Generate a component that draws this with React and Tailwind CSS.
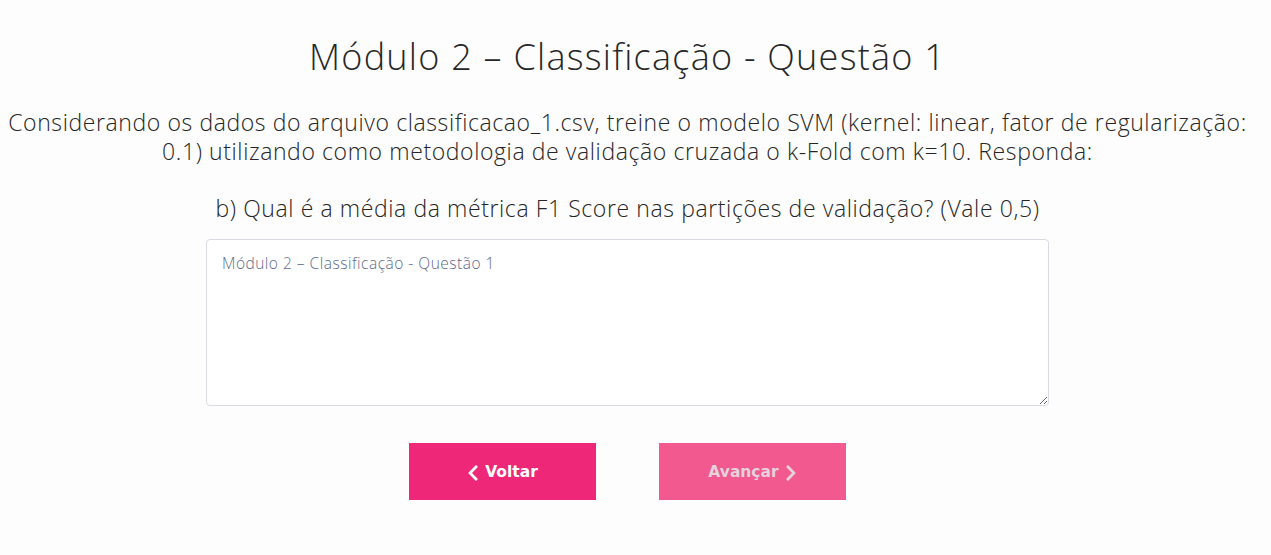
import React from 'react';

const ChevronLeft = ({ className }) => (
  <svg viewBox="0 0 320 512" className={className} fill="currentColor">
    <path d="M34.52 239.03L228.87 44.69c9.37-9.37 24.57-9.37 33.94 0l22.67 22.67c9.36 9.36 9.37 24.52.04 33.9L131.49 256l154.02 154.75c9.34 9.38 9.32 24.54-.04 33.9l-22.67 22.67c-9.37 9.37-24.57 9.37-33.94 0L34.52 272.97c-9.37-9.37-9.37-24.57 0-33.94z" />
  </svg>
);

const ChevronRight = ({ className }) => (
  <svg viewBox="0 0 320 512" className={className} fill="currentColor">
    <path d="M285.48 272.97L91.13 467.31c-9.37 9.37-24.57 9.37-33.94 0l-22.67-22.67c-9.36-9.36-9.37-24.52-.04-33.9L188.51 256 34.48 101.25c-9.34-9.38-9.32-24.54.04-33.9l22.67-22.67c9.37-9.37 24.57-9.37 33.94 0l194.35 194.34c9.37 9.37 9.37 24.57 0 33.95z" />
  </svg>
);

export default function App() {
  return (
    <div className="min-h-[555px] bg-[#fdfdfd] text-[#262626] font-['Open_Sans',sans-serif] font-light">
      <div className="flex flex-col items-center pt-[33px] pr-[16px]">
        <h1 className="text-[36px] leading-[48px] tracking-[1.25px] text-center">
          Módulo 2 – Classificação - Questão 1
        </h1>

        <p className="mt-[27px] text-[23px] leading-[29px] tracking-[0.6px] text-center">
          <span className="block whitespace-nowrap">
            Considerando os dados do arquivo classificacao_1.csv, treine o modelo SVM (kernel: linear, fator de regularização:
          </span>
          <span className="block whitespace-nowrap">
            0.1) utilizando como metodologia de validação cruzada o k-Fold com k=10. Responda:
          </span>
        </p>

        <p className="mt-[28px] text-[23px] leading-[29px] tracking-[0.6px] text-center">
          b) Qual é a média da métrica F1 Score nas partições de validação? (Vale 0,5)
        </p>

        <textarea
          className="mt-[16px] w-[843px] h-[167px] bg-white border border-[#d9dbe3] rounded-[4px] px-[15px] py-[12px] text-[15.5px] leading-[22px] tracking-[0.5px] font-light text-[#5d6a8a] placeholder:text-[#5d6a8a] outline-none resize-y"
          placeholder="Módulo 2 – Classificação - Questão 1"
        />

        <div className="mt-[37px] flex gap-[63px]">
          <button className="w-[187px] h-[57px] pt-[2px] bg-[#ef2778] text-white flex items-center justify-center gap-[6px] font-['DejaVu_Sans',sans-serif] font-bold text-[15.5px]">
            <ChevronLeft className="w-[12px] h-[18px]" />
            Voltar
          </button>
          <button className="w-[187px] h-[57px] pt-[2px] bg-[#f1598f] text-[#e6d2db] flex items-center justify-center gap-[6px] font-['DejaVu_Sans',sans-serif] font-bold text-[15.5px]">
            Avançar
            <ChevronRight className="w-[12px] h-[18px]" />
          </button>
        </div>
      </div>
    </div>
  );
}
